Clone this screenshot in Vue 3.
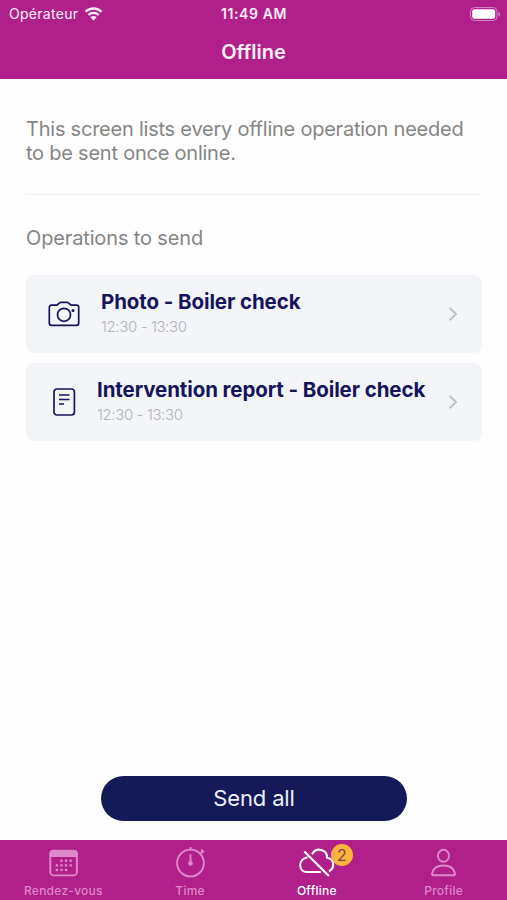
<script setup>
const operations = [
  { icon: 'camera', title: 'Photo - Boiler check', time: '12:30 - 13:30' },
  { icon: 'report', title: 'Intervention report - Boiler check', time: '12:30 - 13:30' },
]

const tabs = [
  { icon: 'calendar', label: 'Rendez-vous' },
  { icon: 'timer', label: 'Time' },
  { icon: 'cloud', label: 'Offline', active: true, badge: 2 },
  { icon: 'profile', label: 'Profile' },
]

const calendarDots = [
  [13.3, 12.6], [17.9, 12.6], [22.5, 12.6],
  [8.7, 17.2], [13.3, 17.2], [17.9, 17.2], [22.5, 17.2],
  [8.7, 21.8], [13.3, 21.8], [17.9, 21.8],
].map(([x, y]) => ({ x, y }))
</script>

<template>
  <div class="screen">
    <header class="header">
      <div class="status">
        <div class="carrier">
          <span class="carrier-name">Opérateur</span>
          <svg class="wifi" width="19" height="14" viewBox="0 0 18 14">
            <path d="M1 4.700C5.400.4 12.600.4 17 4.700" />
            <path d="M3.800 7.800c2.900-2.700 7.500-2.700 10.400 0" />
            <path class="wifi-base" d="M5.900 10.300c1.800-1.600 4.400-1.600 6.200 0L9 13.500z" />
          </svg>
        </div>
        <span class="clock">11:49 AM</span>
        <div class="power">
          <svg width="31" height="14" viewBox="0 0 31 14">
            <rect class="battery-case" x=".5" y=".5" width="26.500" height="13" rx="4" />
            <rect class="battery-fill" x="2.200" y="2.300" width="23" height="9.400" rx="2.300" />
            <path class="battery-tip" d="M28.500 4.700c2.200.8 2.200 3.800 0 4.600z" />
          </svg>
        </div>
      </div>
      <h1 class="title">Offline</h1>
    </header>

    <main class="content">
      <p class="intro">This screen lists every offline operation needed<br />to be sent once online.</p>
      <h2 class="section">Operations to send</h2>
      <ul class="list">
        <li v-for="op in operations" :key="op.icon" class="card" :class="op.icon">
          <svg v-if="op.icon === 'camera'" class="op-icon" width="32" height="26" viewBox="0 0 32 26">
            <path d="M3.300 4.200h5.200c1.500 0 2.400-2.900 4.200-2.900h6.600c1.800 0 2.700 2.900 4.200 2.900h5.200a2 2 0 0 1 2 2v16.100a2 2 0 0 1-2 2H3.300a2 2 0 0 1-2-2V6.200a2 2 0 0 1 2-2z" />
            <circle cx="16" cy="13.800" r="6.500" />
            <circle class="solid" cx="25" cy="9.500" r="1.500" />
          </svg>
          <svg v-else class="op-icon" width="23" height="28" viewBox="0 0 23 28">
            <rect x="1" y="1" width="20.400" height="26" rx="3" />
            <path d="M6 7h10.500M6 11.500h10.500M6 16h5" />
          </svg>
          <div class="details">
            <h3 class="op-title">{{ op.title }}</h3>
            <p class="op-time">{{ op.time }}</p>
          </div>
          <svg class="chevron" width="10" height="16" viewBox="0 0 10 16">
            <path d="M1.500 1.700 8 8l-6.500 6.300" />
          </svg>
        </li>
      </ul>
      <button class="send">Send all</button>
    </main>

    <nav class="tabs">
      <div v-for="tab in tabs" :key="tab.label" class="tab" :class="{ active: tab.active }">
        <div class="tab-icon">
          <svg v-if="tab.icon === 'calendar'" width="32" height="32" viewBox="0 0 32 32">
            <rect x="3.300" y="3.800" width="26.600" height="24.600" rx="3.500" />
            <path class="solid" d="M2.400 10V6.500A3.500 3.500 0 0 1 5.900 3h21.400a3.500 3.500 0 0 1 3.500 3.500V10z" />
            <rect v-for="(dot, i) in calendarDots" :key="i" class="solid" :x="dot.x" :y="dot.y" width="2.300" height="2.300" />
          </svg>
          <svg v-else-if="tab.icon === 'timer'" width="32" height="32" viewBox="0 0 32 32">
            <circle cx="16.500" cy="16" r="13.400" />
            <path d="M16.500 0v3M26.300 6.700l2.700-2.700M27.200 2.500l2.800 2.800M16.500 7.500v9" />
            <circle class="solid" cx="16.500" cy="16.500" r="2.300" />
          </svg>
          <svg v-else-if="tab.icon === 'cloud'" width="38" height="32" viewBox="0 0 38 32">
            <path d="M14 7.300c2.100-3.800 5.700-5.200 9.200-4.300 4.200 1.100 6 4.200 5.800 7.700 4.200.7 6.600 3.700 6.200 7.500-.3 3-1.800 5.100-4.300 6.100M9.500 10.300C5 11.300 2 14.500 2.200 18.500c.2 3.900 3 6.500 6.600 6.500H23M6.300 4.500l24.600 24.600" />
          </svg>
          <svg v-else width="32" height="32" viewBox="0 0 32 32">
            <ellipse cx="15.500" cy="8.800" rx="5.600" ry="6" />
            <path d="M5.500 28.200c-1.200 0-1.700-.8-1.400-2C5.200 21.400 9.700 18.500 15.500 18.500s10.300 2.900 11.400 7.700c.3 1.200-.2 2-1.400 2z" />
          </svg>
          <span v-if="tab.badge" class="badge">{{ tab.badge }}</span>
        </div>
        <span class="tab-label">{{ tab.label }}</span>
      </div>
    </nav>
  </div>
</template>

<style>
body {
  margin: 0;
  background: #fefefe;
}
</style>

<style scoped>
.screen {
  display: flex;
  flex-direction: column;
  height: 900px;
  width: 507px;
  overflow: hidden;
  font-family: Inter, "Liberation Sans", sans-serif;
  background: #fefefe;
}
h1, h2, h3, p, ul {
  margin: 0;
  padding: 0;
}
svg {
  display: block;
  fill: none;
  stroke: currentColor;
  stroke-linejoin: round;
}
.solid {
  fill: currentColor;
  stroke: none;
}
.header {
  flex: none;
  height: 79px;
  background: #b1208a;
  color: #fdeefa;
}
.status {
  display: grid;
  grid-template-columns: 1fr auto 1fr;
  align-items: center;
  height: 27px;
  padding: 0 6px 0 9px;
}
.carrier {
  display: flex;
  align-items: center;
  gap: 6px;
}
.carrier-name {
  font-size: 14px;
  letter-spacing: 0.28px;
  line-height: 27px;
}
.wifi {
  stroke-width: 2.3;
}
.wifi-base {
  fill: currentColor;
  stroke: none;
}
.clock {
  margin-right: 2px;
  font-size: 14px;
  font-weight: 600;
  letter-spacing: 0.6px;
}
.power {
  display: flex;
  justify-content: flex-end;
}
.battery-case {
  stroke: #d583bf;
}
.battery-fill {
  fill: #fff;
  stroke: none;
}
.battery-tip {
  fill: #d583bf;
  stroke: none;
}
.title {
  padding-top: 12px;
  font-size: 20px;
  line-height: 27px;
  font-weight: 600;
  text-align: center;
}
.content {
  flex: 1;
  display: flex;
  flex-direction: column;
  padding: 38px 25px 19px 26px;
}
.intro {
  padding-bottom: 29px;
  border-bottom: 1px solid #efeff0;
  color: #858585;
  font-size: 20px;
  line-height: 24px;
  letter-spacing: -0.23px;
  white-space: nowrap;
}
.section {
  margin-top: 31px;
  color: #858585;
  font-size: 20px;
  line-height: 24px;
  font-weight: 400;
  letter-spacing: -0.14px;
}
.list {
  display: flex;
  flex-direction: column;
  gap: 10px;
  margin-top: 25px;
  list-style: none;
}
.card {
  display: flex;
  align-items: center;
  height: 78px;
  padding: 0 24px 0 22px;
  border-radius: 8px;
  background: #f3f5f9;
  color: #16145a;
}
.card.report {
  padding-left: 27px;
}
.op-icon {
  flex: none;
  stroke-width: 1.7;
}
.details {
  flex: 1;
  margin-left: 21px;
  padding-bottom: 3px;
  white-space: nowrap;
}
.op-title {
  font-size: 20.5px;
  line-height: 24px;
  font-weight: 700;
  letter-spacing: -0.1px;
}
.op-time {
  margin-top: 3px;
  color: #b2b3ba;
  font-size: 15px;
  line-height: 19px;
  font-weight: 300;
  letter-spacing: -0.38px;
}
.chevron {
  flex: none;
  color: #bfc0c5;
  stroke-width: 2;
}
.send {
  align-self: center;
  width: 306px;
  height: 45px;
  margin-top: auto;
  padding: 0 0 2px;
  border: 0;
  border-radius: 23px;
  background: #141957;
  color: #eef0fb;
  font: 400 22px Inter, "Liberation Sans", sans-serif;
  letter-spacing: -0.15px;
}
.tabs {
  flex: none;
  display: grid;
  grid-template-columns: repeat(4, 1fr);
  height: 60px;
  background: #b1208a;
}
.tab {
  display: flex;
  flex-direction: column;
  align-items: center;
  padding-top: 7px;
  color: #df87cb;
}
.tab.active {
  color: #fff;
}
.tab-icon {
  position: relative;
  height: 32px;
  stroke-width: 1.9;
}
.tab.active .tab-icon {
  stroke-width: 2.1;
}
.badge {
  position: absolute;
  top: -3px;
  left: 33px;
  width: 22px;
  height: 22px;
  border-radius: 50%;
  background: #fdb43e;
  color: #8c3d50;
  font-size: 16px;
  line-height: 22px;
  text-align: center;
}
.tab-label {
  margin-top: 4px;
  font-size: 12px;
  line-height: 16px;
  font-weight: 500;
  letter-spacing: 0.25px;
}
</style>
